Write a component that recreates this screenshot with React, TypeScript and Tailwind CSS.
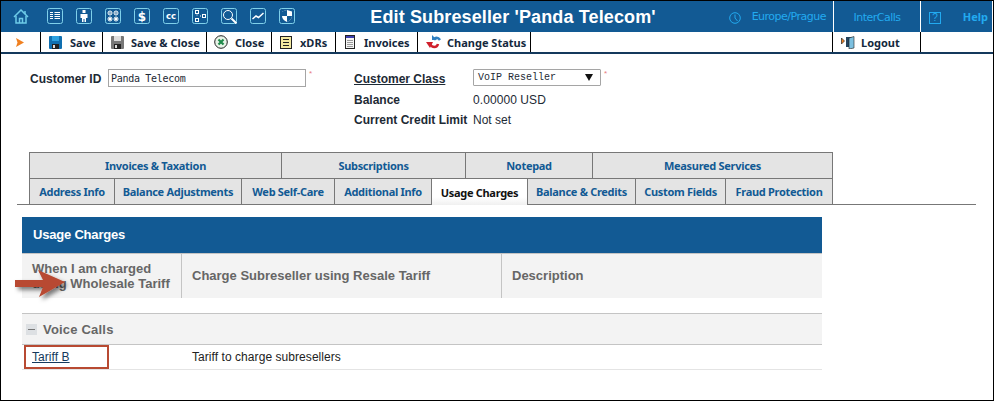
import React from 'react';

const BLUE = 'bg-[#125a94]';

// small outlined square used by the header nav icons
const NavIcon: React.FC<{ children: React.ReactNode }> = ({ children }) => (
  <svg width="16" height="16" viewBox="0 0 16 16" fill="none" className="shrink-0">
    <rect x="0.5" y="0.5" width="15" height="15" rx="2" stroke="#7fd0ea" />
    {children}
  </svg>
);

const navIcons: React.ReactNode[] = [
  <path key="a" d="M3 4.500h3M3 6.500h3M3 8.500h3M3 10.500h3M7.500 4.500h5.500M7.500 6.500h5.500M7.500 8.500h5.500M7.500 10.500h5.500" stroke="#fff" />,
  <g key="b" fill="#fff"><rect x="6.500" y="2" width="3" height="3" /><path d="M4.500 6h7v4h-1.500v4H8.500v-3h-1v3H6v-4H4.500z" /></g>,
  <g key="c" stroke="#fff"><circle cx="5" cy="5" r="2" /><circle cx="11" cy="5" r="2" /><circle cx="5" cy="11" r="2" /><circle cx="11" cy="11" r="2" /><path d="M4 5h2M10 5h2M4 10l2 2M6 10l-2 2M10 10l2 2M12 10l-2 2" /></g>,
  <text key="d" x="8" y="12.500" textAnchor="middle" fontFamily="DejaVu Sans" fontWeight="700" fontSize="12" fill="#fff">$</text>,
  <text key="e" x="8" y="11" textAnchor="middle" fontFamily="DejaVu Sans" fontWeight="700" fontSize="8.500" fill="#fff">cc</text>,
  <g key="f" stroke="#fff"><rect x="3.500" y="2.500" width="3" height="3" /><rect x="10.500" y="6.500" width="3" height="3" /><rect x="3.500" y="10.500" width="3" height="3" /><path d="M5 6.500v1M8 8h1" /></g>,
  <g key="g" stroke="#fff"><circle cx="7" cy="7" r="4.500" /><path d="M10.500 10.500l5 5" strokeWidth="2" /></g>,
  <path key="h" d="M2.500 11l3.500-3 2.500 1.500L13.500 5" stroke="#fff" strokeWidth="1.500" />,
  <g key="i"><path d="M3 3.500L8 2l5 1.500V8c0 3-2.500 5-5 6-2.500-1-5-3-5-6z" fill="#fff" /><path d="M8 2v6H3V3.500zM8 8h5c0 3-2.500 5-5 6z" fill="#125a94" /></g>,
];

const Home = () => (
  <svg width="16" height="15" viewBox="0 0 16 15" fill="none" stroke="#6ecbe8" strokeWidth="1.500" className="shrink-0">
    <path d="M1 8l7-7 7 7" />
    <path d="M3 7v7h10V7" />
    <path d="M6.500 14V9.500h3V14" />
    <path d="M12 2v3" />
  </svg>
);

const Disk: React.FC<{ top: string; body: string }> = ({ top, body }) => (
  <svg width="13" height="13" viewBox="0 0 13 13" className="shrink-0">
    <rect width="13" height="13" rx="1" fill={body} />
    <rect x="3" y="0" width="7" height="5" fill={top} />
    <rect x="3" y="8" width="7" height="5" fill="#222" />
    <rect x="4" y="9" width="2" height="3" fill="#ddd" />
  </svg>
);

const CloseIcon = () => (
  <svg width="14" height="14" viewBox="0 0 14 14" className="shrink-0">
    <circle cx="7" cy="7" r="6.300" fill="#e8f3e8" stroke="#222" />
    <path d="M4.500 4.500l5 5M9.500 4.500l-5 5" stroke="#1f8a4a" strokeWidth="2.200" />
  </svg>
);

const XdrIcon = () => (
  <svg width="12" height="13" viewBox="0 0 12 13" className="shrink-0">
    <rect x="0.500" y="0.500" width="11" height="12" fill="#f3e9a0" stroke="#222" />
    <path d="M3 3.500h6M3 6.500h6M3 9.500h6" stroke="#222" />
  </svg>
);

const InvoiceIcon = () => (
  <svg width="10" height="14" viewBox="0 0 10 14" className="shrink-0">
    <rect x="0.500" y="0.500" width="9" height="13" fill="#f4f4f4" stroke="#222" />
    <rect x="1" y="1" width="8" height="2" fill="#3f3fb0" />
    <path d="M2 5.500h6M2 7.500h6M2 9.500h6M2 11.500h6" stroke="#999" />
  </svg>
);

const StatusIcon = () => (
  <svg width="16" height="14" viewBox="0 0 16 14" fill="none" className="shrink-0">
    <path d="M8 5c1-3 4-3 6 0" stroke="#2f7fc0" strokeWidth="2.500" />
    <path d="M6 0v5h5z" fill="#2f7fc0" />
    <path d="M12 9c-1 4-6 4-8 0" stroke="#d0202c" strokeWidth="2.500" />
    <path d="M0 7h7l-3 6z" fill="#d0202c" />
  </svg>
);

const LogoutIcon = () => (
  <svg width="14" height="13" viewBox="0 0 14 13" className="shrink-0">
    <path d="M0.500 2l3 3-3 3z" fill="#f08020" stroke="#222" strokeWidth="0.700" />
    <path d="M5 1h8v10H5z" fill="#23435e" />
    <path d="M8 2l5-1.500V12l-5 1z" fill="#7cc0e0" stroke="#222" strokeWidth="0.600" />
  </svg>
);

const toolbar = [
  { label: 'Save', icon: <Disk top="#2aa0e0" body="#0f6fb0" />, w: 'w-[62px]', cls: 'pl-[8px] gap-[8px]' },
  { label: 'Save & Close', icon: <Disk top="#ddd" body="#777" />, w: 'w-[104px]', cls: 'pl-[8px] gap-[7px]' },
  { label: 'Close', icon: <CloseIcon />, w: 'w-[65px]', cls: 'pl-[7px] gap-[7px]' },
  { label: 'xDRs', icon: <XdrIcon />, w: 'w-[64px]', cls: 'pl-[8px] gap-[8px]' },
  { label: 'Invoices', icon: <InvoiceIcon />, w: 'w-[82px]', cls: 'pl-[9px] gap-[9px]' },
  { label: 'Change Status', icon: <StatusIcon />, w: 'w-[113px]', cls: 'pl-[8px] gap-[5px]' },
];

const TAB_FONT = "font-['Noto_Sans'] text-[11px] font-bold tracking-[-0.3px]";

const topTabs = [
  { label: 'Invoices & Taxation', w: 'w-[252px]' },
  { label: 'Subscriptions', w: 'w-[184px]' },
  { label: 'Notepad', w: 'w-[127px]' },
  { label: 'Measured Services', w: 'flex-1' },
];

const bottomTabs = [
  { label: 'Address Info', w: 'w-[85px]' },
  { label: 'Balance Adjustments', w: 'w-[127px]' },
  { label: 'Web Self-Care', w: 'w-[93px]' },
  { label: 'Additional Info', w: 'w-[97px]' },
  { label: 'Usage Charges', w: 'w-[96px]', active: true },
  { label: 'Balance & Credits', w: 'w-[108px]' },
  { label: 'Custom Fields', w: 'w-[90px]' },
  { label: 'Fraud Protection', w: 'flex-1' },
];

export default function App() {
  return (
    <div className="relative w-[994px] h-[401px] overflow-hidden bg-white border border-black font-['Liberation_Sans',Arial,sans-serif] text-[12px] text-[#1d2a35]">
      {/* Top bar */}
      <div className={`flex h-[31px] ${BLUE}`}>
        <div className="flex items-center w-[364px] pl-[12px] pb-[1px]">
          <Home />
          <div className="flex items-center gap-[13px] ml-[18px]">
            {navIcons.map((ic, i) => <NavIcon key={i}>{ic}</NavIcon>)}
          </div>
        </div>
        <div className="w-[296px] text-center leading-[33px] text-white text-[18px] font-bold tracking-[0.13px] whitespace-nowrap">
          Edit Subreseller 'Panda Telecom'
        </div>
        <div className="flex items-center justify-end gap-[11px] w-[172px] pt-[2px] pr-[7px] text-[#22aaf0] font-['DejaVu_Sans'] text-[11px] tracking-[-0.5px]">
          <svg width="12" height="12" viewBox="0 0 12 12" fill="none" stroke="#22aaf0" className="shrink-0">
            <circle cx="6" cy="6" r="5.300" />
            <path d="M6 2.500V6l2.500 3" />
          </svg>
          <span>Europe/Prague</span>
        </div>
        <div className="w-[88px] border-x border-white text-center leading-[33px] text-[#22aaf0] font-['DejaVu_Sans'] text-[11px] tracking-[-0.5px]">InterCalls</div>
        <div className="flex flex-1 items-center justify-between pl-[8px] pr-[4px] pt-[2px] border-r border-white text-[#22aaf0]">
          <span className="w-[12px] h-[12px] border border-[#22aaf0] text-[10px] leading-[10px] text-center">?</span>
          <span className="font-['Noto_Sans'] text-[11px] font-bold">Help</span>
        </div>
      </div>

      {/* Toolbar */}
      <div className="flex h-[22px] border-b-2 border-[#14395c] font-['Noto_Sans'] text-[11px] font-bold text-[#14283c]">
        <div className="flex items-center w-[40px] pl-[15px] border-r border-black">
          <svg width="9" height="9" viewBox="0 0 9 9"><path d="M0 0l8 4.500-8 4.500 1.500-4.500z" fill="#f08020" /></svg>
        </div>
        {toolbar.map(t => (
          <div key={t.label} className={`flex items-center ${t.cls} ${t.w} border-r border-black whitespace-nowrap`}>
            {t.icon}
            <span className="pt-[2px]">{t.label}</span>
          </div>
        ))}
        <div className="w-[302px] border-r border-black" />
        <div className="flex items-center gap-[6px] w-[88px] pl-[8px] border-r border-black">
          <LogoutIcon />
          <span className="pt-[2px]">Logout</span>
        </div>
      </div>

      {/* Customer form */}
      <div className="flex pl-[29px] pt-[15px] h-[98px]">
        <div className="flex items-start w-[324px]">
          <span className="w-[78px] font-bold leading-[20px]">Customer ID</span>
          <div className="w-[198px] h-[18px] border border-[#a5a5a5] pl-[2px] font-['DejaVu_Sans_Mono'] text-[10px] leading-[18px] tracking-[-0.3px]">Panda Telecom</div>
          <span className="ml-[3px] text-[8px] leading-[10px] text-[#e88080]">*</span>
        </div>
        <div className="grid grid-cols-[119px_auto] auto-rows-[20px] items-start">
          <span className="font-bold leading-[20px] underline">Customer Class</span>
          <div className="flex">
            <div className="flex items-center justify-between w-[128px] h-[17px] border border-[#a5a5a5] rounded-[1px] px-[4px] font-['Liberation_Mono'] text-[10px]">
              <span>VoIP Reseller</span>
              <svg width="8" height="7" viewBox="0 0 8 7" className="mr-[3px]"><path d="M0 0h8L4 7z" fill="#111" /></svg>
            </div>
            <span className="ml-[3px] text-[8px] leading-[10px] text-[#e88080]">*</span>
          </div>
          <span className="font-bold leading-[22px]">Balance</span>
          <span className="leading-[22px] tracking-[0.08px]">0.00000 USD</span>
          <span className="font-bold leading-[22px]">Current Credit Limit</span>
          <span className="leading-[22px]">Not set</span>
        </div>
      </div>

      {/* Tabs */}
      <div className="ml-[16px] w-[959px] border-b border-[#777] pl-[12px]">
        <div className={`w-[804px] text-[#125a94] ${TAB_FONT}`}>
          <div className="flex h-[26px] border-t border-x border-[#777] bg-[#e4e4e4]">
            {topTabs.map((t, i) => (
              <div key={t.label} className={`${t.w} flex items-center justify-center pt-[2px] ${i < 3 ? 'border-r border-[#777]' : ''}`}>{t.label}</div>
            ))}
          </div>
          <div className="flex h-[26px] border-t border-x border-[#777] bg-[#e4e4e4]">
            {bottomTabs.map((t, i) => (
              <div
                key={t.label}
                className={`${t.w} flex items-center justify-center pt-[2px] whitespace-nowrap ${i < 7 ? 'border-r border-[#777]' : ''} ${t.active ? 'bg-gradient-to-b from-white from-70% to-[#f0f0f0] text-[#111] -mb-px' : ''}`}
              >
                {t.label}
              </div>
            ))}
          </div>
        </div>
      </div>

      {/* Usage charges panel */}
      <div className="ml-[21px] mt-[12px] w-[800px]">
        <div className={`h-[36px] pl-[11px] ${BLUE} text-white text-[13px] tracking-[-0.2px] font-bold leading-[35px]`}>Usage Charges</div>
        <div className="flex h-[45px] border-t border-[#c4c4c4] bg-[#f3f3f3] text-[#666] text-[13px] font-bold">
          <div className="w-[160px] pl-[10px] pt-[7px] leading-[15px] border-r border-[#c4c4c4]">When I am charged using Wholesale Tariff</div>
          <div className="w-[320px] pl-[10px] flex items-center border-r border-[#c4c4c4]">Charge Subreseller using Resale Tariff</div>
          <div className="flex-1 pl-[10px] flex items-center">Description</div>
        </div>
        <div className="flex items-center h-[32px] mt-[15px] border-y border-[#c4c4c4] bg-[#f3f3f3] pl-[4px] text-[#666] text-[13px] tracking-[0.2px] font-bold">
          <span className="flex items-center justify-center w-[11px] h-[11px] bg-[#dde0e3]">
            <span className="w-[7px] h-px bg-[#777]" />
          </span>
          <span className="ml-[6px] pt-px">Voice Calls</span>
        </div>
        <div className="flex h-[25px] border-b border-[#e4e4e4] tracking-[0.06px]">
          <div className="ml-[2px] w-[85px] h-[24px] border-2 border-[#b84a32] pl-[6px] leading-[20px] underline text-[#14395c]">Tariff B</div>
          <div className="ml-[83px] leading-[24px] text-[#222]">Tariff to charge subresellers</div>
        </div>
      </div>

      {/* Callout arrow over the first column */}
      <svg width="58" height="36" viewBox="0 0 58 36" className="absolute left-[13px] top-[268px]">
        <defs>
          <filter id="arrowShadow" x="-20%" y="-20%" width="150%" height="160%">
            <feDropShadow dx="3" dy="3" stdDeviation="2" floodColor="#000" floodOpacity="0.5" />
          </filter>
        </defs>
        <path d="M1 11H29L24 1 51 13 25 28 29 18H1z" fill="#b84a32" filter="url(#arrowShadow)" />
      </svg>
    </div>
  );
}
